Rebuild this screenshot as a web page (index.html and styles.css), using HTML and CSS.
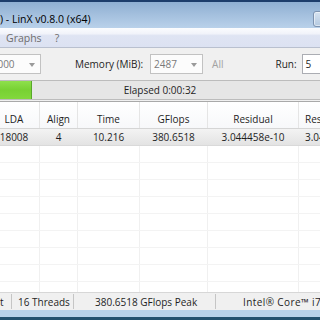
FILE: index.html
```html
<!DOCTYPE html>
<html>
<head>
<meta charset="utf-8">
<link rel="stylesheet" href="styles.css">
</head>
<body>
<div class="window">
  <div class="titlebar">
    <span class="title">) - LinX v0.8.0 (x64)</span>
    <span class="capbtn"></span>
  </div>
  <div class="menubar">
    <span class="menu">Graphs</span>
    <span class="menu">?</span>
  </div>
  <div class="content">
    <div class="controls">
      <div class="combo c1"><span class="val">18000</span><i class="arrow"></i></div>
      <span class="lbl mem">Memory (MiB):</span>
      <div class="combo c2"><span class="val">2487</span><i class="arrow"></i></div>
      <span class="lbl dis">All</span>
      <span class="lbl run">Run:</span>
      <div class="input">5</div>
    </div>
    <div class="progress">
      <div class="fill"></div>
      <span class="ptext">Elapsed 0:00:32</span>
    </div>
    <div class="table">
      <div class="row head">
        <span>LDA</span><span>Align</span><span>Time</span><span>GFlops</span><span>Residual</span><span class="l">Residual (norm)</span>
      </div>
      <div class="row data">
        <span>18008</span><span>4</span><span>10.216</span><span>380.6518</span><span>3.044458e-10</span><span class="l">3.046172e-02</span>
      </div>
      <div class="row empty"><span></span><span></span><span></span><span></span><span></span><span></span></div>
      <div class="row empty"><span></span><span></span><span></span><span></span><span></span><span></span></div>
      <div class="row empty"><span></span><span></span><span></span><span></span><span></span><span></span></div>
      <div class="row empty"><span></span><span></span><span></span><span></span><span></span><span></span></div>
      <div class="row empty"><span></span><span></span><span></span><span></span><span></span><span></span></div>
      <div class="row empty"><span></span><span></span><span></span><span></span><span></span><span></span></div>
      <div class="row empty"><span></span><span></span><span></span><span></span><span></span><span></span></div>
      <div class="row empty"><span></span><span></span><span></span><span></span><span></span><span></span></div>
      <div class="row empty"><span></span><span></span><span></span><span></span><span></span><span></span></div>
    </div>
  </div>
  <div class="status">
    <span class="sec s1">Test</span>
    <span class="sec s2">16 Threads</span>
    <span class="sec s3">380.6518 GFlops Peak</span>
    <span class="sec s4">Intel® Core™ i7 CPU</span>
  </div>
  <div class="frame"></div>
</div>
</body>
</html>
```

FILE: styles.css
```css
* { box-sizing: border-box; margin: 0; padding: 0; }
html, body { width: 320px; height: 320px; overflow: hidden; }
body {
  font-family: "Open Sans", "Noto Sans", sans-serif;
  font-size: 10px;
  color: #1e1e1e;
  background: #f0f0f0;
}
.window {
  width: 320px;
  height: 320px;
  display: flex;
  flex-direction: column;
  overflow: hidden;
}
.titlebar {
  height: 28px;
  flex: none;
  border-top: 2px solid #1d3d6b;
  background: linear-gradient(#8fafd2, #b9d1ea);
  display: flex;
  justify-content: space-between;
  align-items: flex-start;
}
.title {
  font-size: 10.5px;
  line-height: 12px;
  margin-top: 11px;
  color: #000;
  white-space: nowrap;
}
.capbtn {
  flex: none;
  width: 27px;
  height: 16px;
  margin-top: 9px;
  margin-right: -20px;
  border: 1px solid #7d93b0;
  border-radius: 3px;
  background: linear-gradient(#d6e3f1, #b4c9e0);
  box-shadow: inset 0 0 0 1px rgba(255,255,255,0.5);
}
.menubar {
  height: 20px;
  flex: none;
  border-bottom: 1px solid #b9c0cf;
  background: linear-gradient(#fbfcfe 0, #f1f3fa 30%, #dfe4f3 40%, #dce2f2 100%);
  display: flex;
  align-items: center;
  padding-left: 6px;
  gap: 13px;
}
.menu {
  font-size: 10.5px;
  color: #6d6d6d;
  line-height: 12px;
  margin-top: 1px;
}
.content {
  flex: 1;
  display: flex;
  flex-direction: column;
  min-height: 0;
}
.controls {
  margin-top: 6px;
  height: 20px;
  display: flex;
  align-items: center;
  white-space: nowrap;
}
.controls > * { flex: none; }
.combo {
  height: 20px;
  border: 1px solid #c2c2c2;
  background: #fcfcfc;
  color: #7a7a7a;
  display: flex;
  align-items: center;
  justify-content: space-between;
  padding: 0 5px 0 4px;
}
.c1 { width: 60px; margin-left: -19px; }
.c2 { width: 53px; margin-left: 7px; padding-left: 3px; }
.arrow {
  width: 0;
  height: 0;
  border-left: 3.5px solid transparent;
  border-right: 3.5px solid transparent;
  border-top: 4px solid #9a9a9a;
  margin-top: 1px;
}
.lbl { line-height: 12px; }
.mem { margin-left: 34px; }
.dis { color: #a2a2a2; margin-left: 9px; }
.run { margin-left: 52px; }
.input {
  width: 40px;
  height: 20px;
  margin-left: 5px;
  border: 1px solid #abadb3;
  background: #fff;
  padding-left: 3px;
  line-height: 18px;
}
.progress {
  margin: 6px -10px 0;
  height: 20px;
  border-top: 1px solid #bcbcbc;
  border-bottom: 1px solid #bcbcbc;
  background: #e6e6e6;
  display: flex;
  align-items: center;
  justify-content: center;
  position: relative;
}
.fill {
  position: absolute;
  left: 0;
  top: 0;
  bottom: 0;
  width: 42px;
  background: linear-gradient(#8ee04c, #78d133 50%, #82d83d);
  border-right: 1px solid #58a82a;
}
.ptext { position: relative; }
.table {
  margin: 1px 0 0 -11px;
  flex: 1;
  min-height: 0;
  overflow: hidden;
  border-top: 1px solid #a9a9a9;
  background: #fff;
}
.row {
  display: grid;
  grid-template-columns: 51px 38px 62px 68px 91px 80px;
  white-space: nowrap;
}
.row span {
  border-right: 1px solid #f0f0f0;
  text-align: center;
  overflow: hidden;
}
.row span.l { text-align: left; padding-left: 6px; }
.head {
  height: 27px;
  border-bottom: 1px solid #d5d5d5;
  background: linear-gradient(#ffffff, #f7f8fa);
}
.head span {
  border-right-color: #e5e5e5;
  padding-top: 11px;
  line-height: 12px;
}
.data {
  height: 17px;
  background: linear-gradient(#f3f3f3, #e3e3e3);
  border-bottom: 1px solid #d9d9d9;
}
.data span {
  border-right-color: transparent;
  line-height: 16px;
}
.empty {
  height: 17px;
  border-bottom: 1px solid #f3f3f3;
}
.status {
  height: 18px;
  flex: none;
  border-top: 1px solid #d7d7d7;
  display: flex;
  align-items: center;
  white-space: nowrap;
}
.sec {
  flex: none;
  line-height: 12px;
  border-right: 1px solid #c5c5c5;
  height: 15px;
  display: flex;
  align-items: center;
}
.s1 { width: 30px; margin-left: -18px; padding-left: 2px; }
.s2 { width: 62px; padding-left: 6px; }
.s3 { width: 142px; padding-left: 21px; }
.s4 { padding-left: 27px; border-right: none; letter-spacing: 0.4px; }
.frame {
  height: 10px;
  flex: none;
  border-bottom: 3px solid #24506f;
  background: #b9d1ea;
}
```
